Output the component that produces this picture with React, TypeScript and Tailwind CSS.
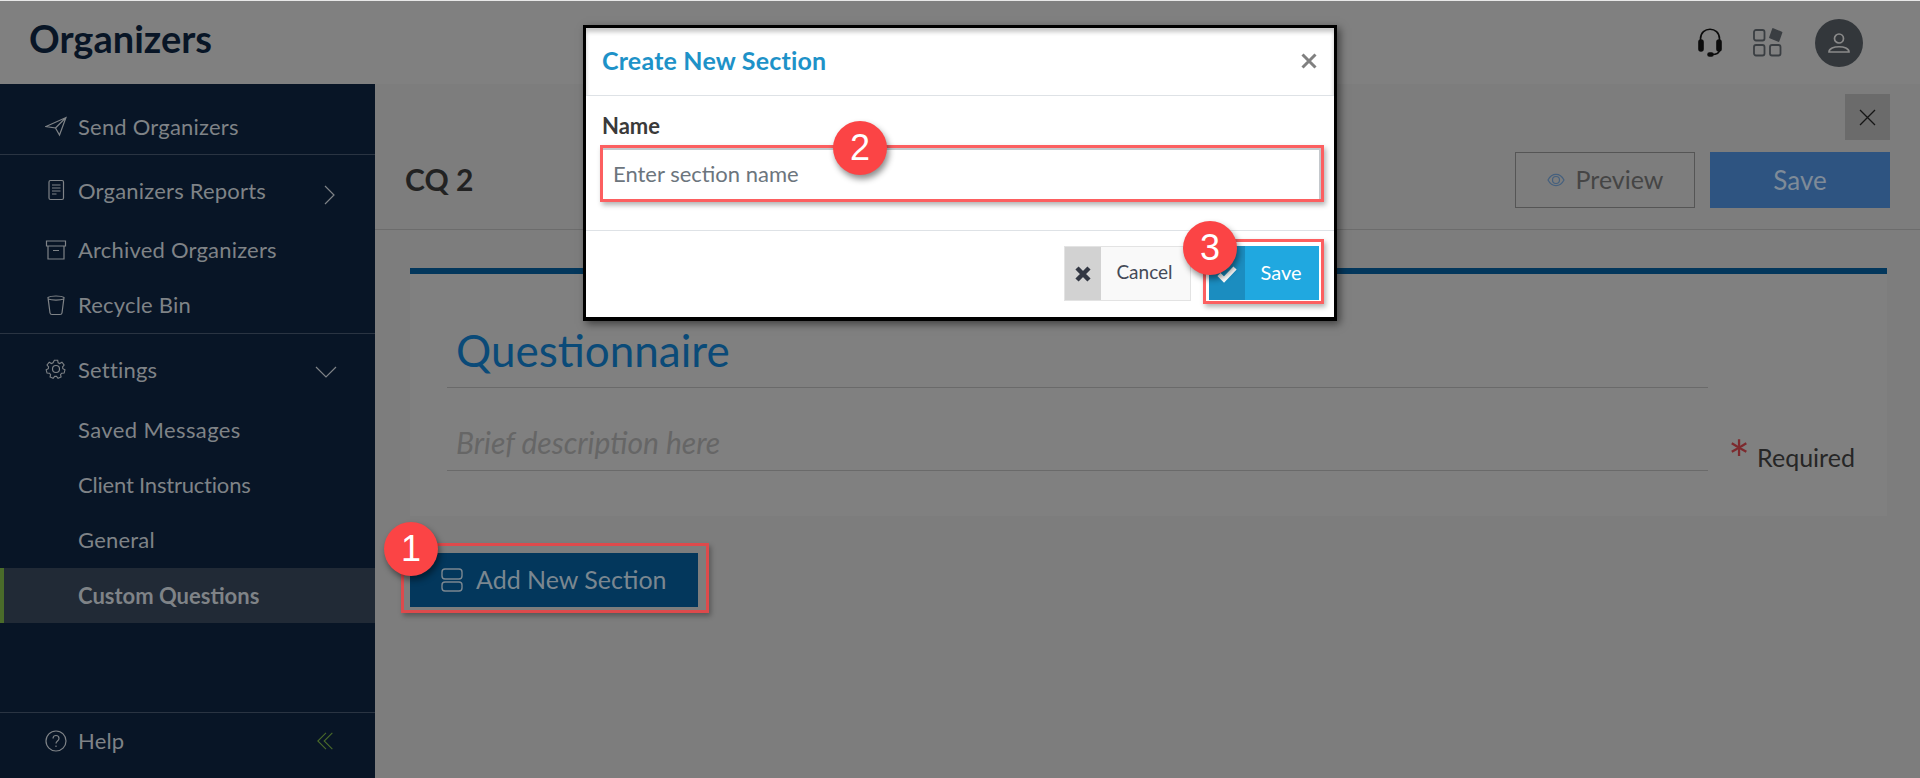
import type { ReactNode } from "react";

const font = { fontFamily: "Lato, 'Noto Sans', sans-serif" };

const Badge = ({ n, className }: { n: number; className: string }) => (
  <div
    className={`absolute w-[54px] h-[54px] rounded-full bg-[#fb4445] text-white text-[36px] flex items-center justify-center shadow-[2px_4px_6px_rgba(0,0,0,0.45)] ${className}`}
    style={{ fontFamily: "'Liberation Sans', sans-serif" }}
  >
    {n}
  </div>
);

const Icon = ({ children, size = 22, className = "" }: { children: ReactNode; size?: number; className?: string }) => (
  <svg width={size} height={size} viewBox="0 0 22 22" fill="none" stroke="currentColor" strokeWidth="1.2" className={className}>
    {children}
  </svg>
);

const NavRow = ({ icon, label, right, className = "" }: { icon?: ReactNode; label: string; right?: ReactNode; className?: string }) => (
  <div className={`flex items-center pl-[45px] pr-[38px] text-[22px] tracking-[0.2px] text-[#7f8387] ${className}`}>
    <div className="w-[33px] shrink-0 flex items-center">{icon}</div>
    <span className="flex-1">{label}</span>
    {right}
  </div>
);

const SubRow = ({ label, className = "" }: { label: string; className?: string }) => (
  <div className={`h-[55px] flex items-center pl-[78px] text-[22px] text-[#7f8387] ${className}`}>{label}</div>
);

const Sidebar = () => (
  <aside className="w-[375px] shrink-0 bg-[#081526] flex flex-col">
    <NavRow
      className="h-[71px] pt-[14px] border-b border-[#2a3442]"
      label="Send Organizers"
      icon={<Icon><path d="M1 11.500 21 2.500 14.500 20 10.500 13 1 11.500ZM10.500 13 21 2.500" /></Icon>}
    />
    <NavRow
      className="h-[72px] pb-[2px]"
      label="Organizers Reports"
      icon={<Icon><rect x="4" y="1.500" width="14.500" height="19" rx="1.500" /><path d="M7 6h8.500M7 9h8.500M7 12h8.500M7 15h4.500" /></Icon>}
      right={<Icon size={22} className="mt-[10px] mr-[-4px]"><path d="M6 2l9 9-9 9" /></Icon>}
    />
    <NavRow
      className="h-[55px] pb-[10px]"
      label="Archived Organizers"
      icon={<Icon><path d="M1.500 2h19v5h-19zM3 7v13h16V7M8 11.500h6" /></Icon>}
    />
    <NavRow
      className="h-[52px] pb-[6px] border-b border-[#2a3442]"
      label="Recycle Bin"
      icon={<Icon><path d="M3 3.500c3-2 13-2 16 0l-2 15.500c-.2 1.200-1 1.500-2 1.500H7c-1 0-1.800-.3-2-1.500L3 3.500ZM3 5c4 1.500 12 1.500 16 0" /></Icon>}
    />
    <NavRow
      className="h-[70px]"
      label="Settings"
      icon={
        <Icon>
          <circle cx="11" cy="11" r="3.500" />
          <path d="M9.200 1.500h3.600l.5 2.700 1.700.8 2.400-1.400 2.400 3-1.700 2.100.3 1.900 2.300 1.300-.9 3.500-2.700.1-1.200 1.500.6 2.700-3.300 1.400-1.700-2.100h-2l-1.700 2.100-3.300-1.400.6-2.700-1.200-1.500-2.700-.1-.9-3.500 2.300-1.300.3-1.900-1.700-2.100 2.400-3 2.400 1.400 1.700-.8z" transform="scale(.92) translate(1 1)" />
        </Icon>
      }
      right={<Icon size={22} className="mt-[6px]"><path d="M1 6l10 10 10-10" /></Icon>}
    />
    <SubRow label="Saved Messages" className="mt-[-2px] tracking-[0.4px]" />
    <SubRow label="Client Instructions" className="tracking-[-0.2px]" />
    <SubRow label="General" className="tracking-[0.2px]" />
    <div className="mt-[1px] h-[55px] flex items-center pl-[74px] border-l-4 border-[#4a6b2a] bg-[#212a36] text-[22px] font-bold text-[#7f8387]">
      Custom Questions
    </div>
    <div className="flex-1" />
    <NavRow
      className="h-[66px] pb-[10px] border-t border-[#2a3442]"
      label="Help"
      icon={
        <Icon>
          <circle cx="11" cy="11" r="10" />
          <path d="M8 8.500c0-4 6-4 6 0 0 2.500-3 2.500-3 5M11 15.500v1.500" />
        </Icon>
      }
      right={<Icon size={20} className="text-[#4a6b2a] mr-[1px]"><path d="M11 2 2 11l9 9M18 2 9 11l9 9" /></Icon>}
    />
  </aside>
);

const Modal = () => (
  <div className="absolute left-[583px] top-[24px] w-[754px] h-[296px] bg-white border-[3px] border-black border-b-4 shadow-[3px_3px_8px_rgba(0,0,0,0.5)] flex flex-col">
    <div className="h-[68px] flex items-center justify-between pl-[16px] pr-[17px] pb-[2px] border-b border-[#dee2e6] shadow-[inset_0_4px_4px_rgba(0,0,0,0.22)]">
      <span className="text-[25px] tracking-[0.2px] font-bold text-[#1e92c8]">Create New Section</span>
      <svg width="16" height="16" viewBox="0 0 16 16" stroke="#808080" strokeWidth="3"><path d="M1.500 1.500l13 13M14.500 1.500l-13 13" /></svg>
    </div>
    <div className="h-[135px] pl-[14px] pr-[10px] pt-[17px] border-b border-[#dee2e6]">
      <div className="text-[22px] font-bold leading-[26px] text-[#3a3a3a] pl-[2px]">Name</div>
      <div className="mt-[6px] h-[57px] border-[3px] border-[#fc5f60] shadow-[2px_3px_5px_rgba(0,0,0,0.3)]">
        <div className="h-full flex items-center pl-[10px] pb-[2px] text-[22px] text-[#6c757d] border-t-2 border-r-2 border-[#c4c8cc]">Enter section name</div>
      </div>
    </div>
    <div className="flex-1 flex justify-end items-start gap-[12px] pr-[10px] pt-[8px]">
      <div className="mt-[7px] w-[127px] h-[55px] flex border border-[#e3e3e3] bg-[#f9f9f9]">
        <div className="w-[36px] bg-[#d2d2d2] flex items-center justify-center">
          <svg width="16" height="16" viewBox="0 0 16 16" stroke="#323743" strokeWidth="4.500"><path d="M2 2l12 12M14 2L2 14" /></svg>
        </div>
        <div className="flex-1 flex items-center justify-center pb-[2px] pr-[2px] text-[19px] text-[#444a57]">Cancel</div>
      </div>
      <div className="w-[121px] h-[65px] border-[3px] border-[#fc5f60] pt-[4px] pr-[2px] pb-[1px] pl-[3px] shadow-[2px_3px_5px_rgba(0,0,0,0.3)]">
        <div className="h-full flex bg-[#20a8e0]">
          <div className="w-[36px] bg-[#1b8dc0] flex items-center justify-center pt-[2px]">
            <svg width="20" height="18" viewBox="0 0 20 18" fill="none" stroke="white" strokeWidth="4.500"><path d="M2 9.500l5 5L18 3" /></svg>
          </div>
          <div className="flex-1 flex items-center justify-center pb-[2px] pr-[2px] text-[20px] text-white">Save</div>
        </div>
      </div>
    </div>
  </div>
);

export default function App() {
  return (
    <div className="relative w-[1920px] h-[778px] overflow-hidden flex flex-col bg-[#7d7d7d] border-t border-[#e8e8e8]" style={font}>
      <header className="h-[83px] shrink-0 flex items-center bg-[#808080] pl-[29px] pr-[57px]">
        <h1 className="flex-1 text-[38px] font-bold text-[#081526] pb-[8px]">Organizers</h1>
        <svg width="24" height="29" viewBox="0 0 24 29" fill="none" stroke="#0c0c0c" strokeWidth="1.600" className="mr-[31px]">
          <path d="M2.500 13V11C2.500 -2 21.500 -2 21.500 11v2" />
          <rect x="1" y="12" width="4" height="11" rx="2" fill="#0c0c0c" />
          <rect x="19" y="12" width="4" height="11" rx="2" fill="#0c0c0c" />
          <path d="M21.500 22c0 3.500-3 4.500-8 4.500" />
          <rect x="10" y="25" width="5" height="3" rx="1.500" fill="#0c0c0c" />
        </svg>
        <svg width="30" height="29" viewBox="0 0 30 29" fill="none" stroke="#3a3e42" strokeWidth="1.800" className="mr-[32px]">
          <rect x="1" y="2" width="10.500" height="10.500" rx="2" />
          <rect x="1" y="17" width="10.500" height="10.500" rx="2" />
          <rect x="17" y="17" width="10.500" height="10.500" rx="2" />
          <path d="M20 1l8.500 3.500-3 8.500-8.500-3.500z" fill="#3a3e42" strokeLinejoin="round" />
        </svg>
        <div className="w-[48px] h-[48px] rounded-full bg-[#33373b] flex items-center justify-center">
          <svg width="22" height="22" viewBox="0 0 22 22" fill="none" stroke="#8a8a8a" strokeWidth="1.700">
            <circle cx="11" cy="6.500" r="4.500" />
            <path d="M1 20c0-7 20-7 20 0z" />
          </svg>
        </div>
      </header>
      <div className="flex-1 flex min-h-0">
        <Sidebar />
        <main className="flex-1 flex flex-col">
          <div className="h-[146px] shrink-0 border-b border-[#6c6c6c] flex flex-col items-end pt-[10px] pr-[30px] relative">
            <div className="w-[45px] h-[46px] bg-[#6b6b6b] flex items-center justify-center">
              <svg width="17" height="17" viewBox="0 0 17 17" stroke="#151515" strokeWidth="1.300"><path d="M1 1l15 15M16 1L1 16" /></svg>
            </div>
            <div className="mt-[12px] flex gap-[15px] w-full items-center">
              <div className="flex-1 pl-[30px] text-[30px] font-bold text-[#222] pb-[2px]">CQ 2</div>
              <div className="w-[180px] h-[56px] border border-[#555] flex items-center justify-center gap-[11px] text-[25px] text-[#454545]">
                <svg width="18" height="14" viewBox="0 0 18 14" fill="none" stroke="#45607e" strokeWidth="1.200"><path d="M1 7c4-7.500 12-7.500 16 0-4 7.500-12 7.500-16 0z" /><circle cx="9" cy="7" r="3.500" /></svg>
                Preview
              </div>
              <div className="w-[180px] h-[56px] bg-[#2e5481] flex items-center justify-center text-[26px] text-[#7f8b98]">Save</div>
            </div>
          </div>
          <div className="pl-[35px] pr-[33px] pt-[38px]">
            <div className="h-[248px] border-t-[6px] border-[#03375c] bg-[#808080] pl-[37px] pr-[37px] flex">
              <div className="flex-1">
                <div className="h-[114px] flex items-end pb-[4px] pl-[9px] border-b border-[#6a6a6a] text-[44px] text-[#0a4a78]">Questionnaire</div>
                <div className="h-[83px] flex items-center pl-[9px] pt-[26px] border-b border-[#6a6a6a] text-[30px] italic text-[#666]">Brief description here</div>
              </div>
              <div className="w-[142px] pt-[159px] pl-[20px] flex items-start text-[25px] text-[#262626]">
                <span className="text-[#7d2a2e] text-[52px] leading-[52px] mr-[7px]">*</span>
                <span className="mt-[9px] leading-[30px]">Required</span>
              </div>
            </div>
          </div>
          <div className="ml-[26px] mt-[27px] w-[308px] h-[70px] border-[3px] border-[#dd4a4c] pt-[7px] pr-[8px] pb-[3px] pl-[6px] shadow-[2px_3px_5px_rgba(0,0,0,0.3)]">
            <div className="h-full flex items-center bg-[#03375c] pl-[31px] gap-[13px] text-[25px] text-[#7b8790]">
              <svg width="22" height="24" viewBox="0 0 22 24" fill="none" stroke="#7b8790" strokeWidth="1.400"><rect x="1" y="1" width="20" height="10" rx="3" /><rect x="1" y="14" width="20" height="9" rx="3" /></svg>
              Add New Section
            </div>
          </div>
        </main>
      </div>
      <Modal />
      <Badge n={1} className="left-[384px] top-[521px]" />
      <Badge n={2} className="left-[833px] top-[120px]" />
      <Badge n={3} className="left-[1183px] top-[220px]" />
    </div>
  );
}
